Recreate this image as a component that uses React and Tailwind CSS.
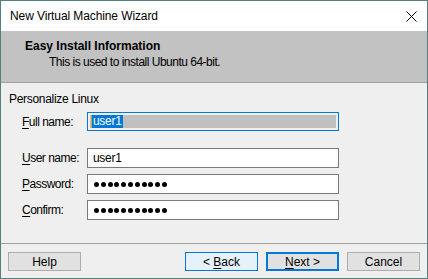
import React from "react";

const font = { fontFamily: '"Liberation Sans", Arial, sans-serif' };

function Dots() {
  return (
    <div className="flex items-center gap-[1.8px]">
      {Array.from({ length: 11 }).map((_, i) => (
        <span key={i} className="block w-[5px] h-[5px] rounded-full bg-black" />
      ))}
    </div>
  );
}

function Row({ u, rest, children, className = "" }) {
  return (
    <div className={"flex items-center " + className}>
      <div className="w-[65px] pl-[21px] box-content text-[12px] tracking-[-0.5px] text-black leading-none whitespace-nowrap">
        <span className="underline underline-offset-2">{u}</span>
        {rest}
      </div>
      {children}
    </div>
  );
}

export default function App() {
  return (
    <div
      className="w-[428px] h-[279px] border border-[#55807a] bg-[#efefef] flex flex-col overflow-hidden"
      style={font}
    >
      {/* Title bar */}
      <div className="h-[30px] bg-white flex items-center justify-between pl-[9px] pr-[9px] shrink-0">
        <span className="text-[12px] tracking-[-0.1px] text-black">New Virtual Machine Wizard</span>
        <svg width="11" height="11" viewBox="0 0 11 11" className="mr-[1px]">
          <path d="M0.5 0.5 L10.5 10.5 M10.5 0.5 L0.5 10.5" stroke="#000" strokeWidth="1" />
        </svg>
      </div>

      {/* Header */}
      <div className="h-[52px] bg-[#c2c2c2] border-b border-[#a0a0a0] shrink-0 pl-[24px] pt-[8px]">
        <div className="text-[12px] font-bold text-black leading-[14px]">Easy Install Information</div>
        <div className="text-[12px] tracking-[-0.5px] text-black leading-[14px] pl-[24px] mt-[2px]">
          This is used to install Ubuntu 64-bit.
        </div>
      </div>

      {/* Content */}
      <div className="flex-1 flex flex-col pt-[8px]">
        <div className="pl-[8px] text-[12px] tracking-[-0.3px] leading-[16px] text-black">Personalize Linux</div>

        <Row u="F" rest="ull name:" className="mt-[5px]">
          <div className="w-[252px] h-[19px] border border-[#0078d7] p-[2px]">
            <div className="h-full bg-[#c0c0c0] flex items-center pl-[1px]">
              <span className="h-full bg-[#0078d7] text-white text-[12px] tracking-[-0.3px] leading-[13px] flex items-center px-[1px] border-l border-[#c8a060]">
                user1
              </span>
            </div>
          </div>
        </Row>

        <Row u="U" rest="ser name:" className="mt-[17px]">
          <div className="w-[252px] h-[20px] border border-[#7a7a7a] bg-white flex items-center pl-[5px] text-[12px] tracking-[-0.3px] text-black">
            user1
          </div>
        </Row>

        <Row u="P" rest="assword:" className="mt-[6px]">
          <div className="w-[252px] h-[20px] border border-[#7a7a7a] bg-white flex items-center pl-[6px]">
            <Dots />
          </div>
        </Row>

        <Row u="C" rest="onfirm:" className="mt-[6px]">
          <div className="w-[252px] h-[20px] border border-[#7a7a7a] bg-white flex items-center pl-[6px]">
            <Dots />
          </div>
        </Row>
      </div>

      {/* Footer */}
      <div className="border-t border-[#a0a0a0] shrink-0 h-[35px] pt-[8px] px-[7px] flex justify-between">
        <button className="w-[73px] h-[19px] border border-[#adadad] bg-[#e1e1e1] text-[12px] text-black leading-none">
          Help
        </button>
        <div className="flex gap-[8px]">
          <button className="w-[73px] h-[19px] border border-[#0078d7] bg-[#e5f1fb] text-[12px] text-black leading-none">
            &lt; <span className="underline underline-offset-2">B</span>ack
          </button>
          <button className="w-[73px] h-[19px] border-2 border-[#0078d7] bg-[#e1e1e1] text-[12px] text-black leading-none">
            <span className="underline underline-offset-2">N</span>ext &gt;
          </button>
          <button className="w-[73px] h-[19px] border border-[#adadad] bg-[#e1e1e1] text-[12px] text-black leading-none">
            Cancel
          </button>
        </div>
      </div>
    </div>
  );
}
